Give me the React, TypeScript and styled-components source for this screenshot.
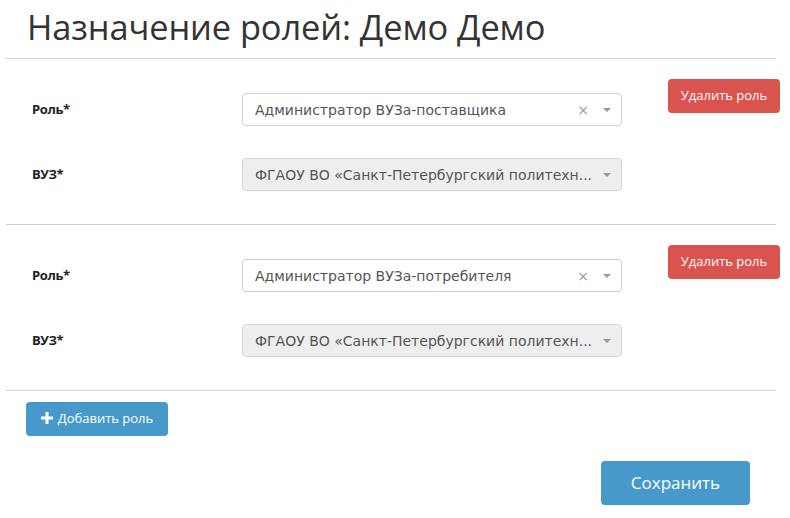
import React from "react";
import styled, { createGlobalStyle } from "styled-components";

const Global = createGlobalStyle`
  html, body { margin: 0; padding: 0; background: #fff; }
  body { font-family: "Open Sans", "Liberation Sans", sans-serif; color: #333; }
  * { box-sizing: border-box; }
`;

const Page = styled.div`
  width: 790px;
  padding: 0 0 0 6px;
`;

const Title = styled.h1`
  margin: 0;
  padding: 2px 0 0 21px;
  height: 58px;
  font-family: "Open Sans", sans-serif;
  font-weight: 400;
  font-size: 34.4px;
  line-height: 50px;
  color: #333;
  letter-spacing: -0.1px;
`;

const Rule = styled.hr`
  margin: 0;
  width: 770px;
  border: 0;
  border-top: 1px solid #cfcfcf;
  height: 1px;
`;

const Block = styled.div`
  display: flex;
  height: 165px;
  padding-top: 20px;
`;

const Fields = styled.div`
  display: grid;
  grid-template-columns: 210px 380px;
  row-gap: 32px;
  padding-top: 14px;
  padding-left: 26px;
  align-content: start;
  width: 662px;
`;

const Label = styled.div`
  font-family: "Open Sans", sans-serif;
  font-weight: 700;
  font-size: 13px;
  color: #222;
  height: 31px;
  display: flex;
  align-items: center;
  letter-spacing: -0.4px;
`;

const Select = styled.div<{ $disabled?: boolean }>`
  height: 33px;
  border: 1px solid ${(p) => (p.$disabled ? "#d6d6d6" : "#cfcfcf")};
  border-radius: 4px;
  background: ${(p) => (p.$disabled ? "#eeeeee" : "#fff")};
  display: flex;
  align-items: center;
  padding: 0 8px 0 12px;
  font-family: "DejaVu Sans", sans-serif;
  font-size: 14px;
  color: #555;
`;

const SelectText = styled.span`
  flex: 1;
  white-space: nowrap;
  overflow: hidden;
  text-overflow: ellipsis;
  padding-right: 6px;
`;

const Clear = styled.span`
  color: #999;
  font-size: 14px;
  margin-right: 14px;
  font-family: "DejaVu Sans", sans-serif;
`;

const Arrow = styled.span`
  width: 0;
  height: 0;
  border-left: 4px solid transparent;
  border-right: 4px solid transparent;
  border-top: 4px solid #999;
  margin-right: 2px;
`;

const DangerButton = styled.button`
  width: 112px;
  height: 34px;
  border: 0;
  border-radius: 4px;
  background: #d9534f;
  color: #fff;
  font-family: "Open Sans", sans-serif;
  font-size: 13px;
  padding: 0 0 2px;
  cursor: pointer;
`;

const Footer = styled.div`
  padding: 11px 0 0 20px;
`;

const PrimaryButton = styled.button<{ $big?: boolean }>`
  display: inline-flex;
  align-items: center;
  justify-content: center;
  gap: 5px;
  border: 0;
  border-radius: 4px;
  background: #4899cb;
  color: #fff;
  font-family: "Open Sans", sans-serif;
  font-size: ${(p) => (p.$big ? "17px" : "13px")};
  width: ${(p) => (p.$big ? "149px" : "142px")};
  height: ${(p) => (p.$big ? "44px" : "34px")};
  padding: 0 0 2px;
  cursor: pointer;
`;

const SaveRow = styled.div`
  display: flex;
  justify-content: flex-end;
  padding: 25px 40px 0 0;
`;

const Plus = () => (
  <svg width="12" height="12" viewBox="0 0 12 12" aria-hidden>
    <path d="M4.5 0h3v4.5H12v3H7.5V12h-3V7.5H0v-3h4.5z" fill="#fff" />
  </svg>
);

type Role = { role: string; vuz: string };

const roles: Role[] = [
  { role: "Администратор ВУЗа-поставщика", vuz: "ФГАОУ ВО «Санкт-Петербургский политехн..." },
  { role: "Администратор ВУЗа-потребителя", vuz: "ФГАОУ ВО «Санкт-Петербургский политехн..." },
];

export default function App() {
  return (
    <Page>
      <Global />
      <Title>Назначение ролей: Демо Демо</Title>
      <Rule />
      {roles.map((r, i) => (
        <React.Fragment key={i}>
          <Block>
            <Fields>
              <Label>Роль*</Label>
              <Select>
                <SelectText>{r.role}</SelectText>
                <Clear>×</Clear>
                <Arrow />
              </Select>
              <Label>ВУЗ*</Label>
              <Select $disabled>
                <SelectText>{r.vuz}</SelectText>
                <Arrow />
              </Select>
            </Fields>
            <DangerButton>Удалить роль</DangerButton>
          </Block>
          <Rule />
        </React.Fragment>
      ))}
      <Footer>
        <PrimaryButton>
          <Plus />
          Добавить роль
        </PrimaryButton>
      </Footer>
      <SaveRow>
        <PrimaryButton $big>Сохранить</PrimaryButton>
      </SaveRow>
    </Page>
  );
}
